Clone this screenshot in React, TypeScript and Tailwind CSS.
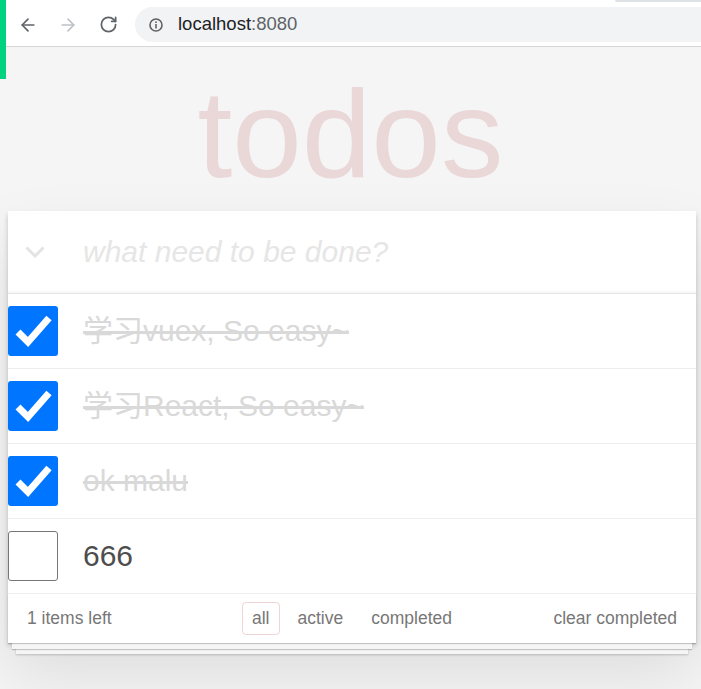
import { ArrowLeft, ArrowRight, RotateCw } from "lucide-react";

const todos = [
  { text: "学习vuex, So easy~", done: true },
  { text: "学习React, So easy~", done: true },
  { text: "ok malu", done: true },
  { text: "666", done: false },
];

function CheckBox({ checked }: { checked: boolean }) {
  if (!checked) {
    return <div className="h-[50px] w-[50px] shrink-0 rounded-[3px] border border-[#767676] bg-white" />;
  }
  return (
    <div className="h-[50px] w-[50px] shrink-0 rounded-[3px] bg-[#0075ff]">
      <svg width="50" height="50" viewBox="0 0 50 50">
        <polyline points="10,26 20,36 41,12" fill="none" stroke="#fff" strokeWidth="7" />
      </svg>
    </div>
  );
}

export default function App() {
  return (
    <div className="relative min-h-[689px] w-[701px] overflow-hidden bg-[#f5f5f5] font-['Liberation_Sans','Noto_Sans_CJK_SC',sans-serif]">
      {/* green strip on the left edge */}
      <div className="absolute left-0 top-0 z-10 h-[79px] w-[6px] bg-[#00d27f]" />

      {/* browser chrome */}
      <div className="h-[47px] border-b border-[#d6d6d6] bg-white">
        <div className="flex h-[7px] justify-end">
          <div className="h-[2px] w-[86px] rounded-bl-[4px] bg-[#dee1e6]" />
        </div>
        <div className="flex h-[35px] items-center overflow-hidden">
          <div className="flex w-[135px] items-center">
            <ArrowLeft className="ml-[18px]" size={20} color="#5f6368" strokeWidth={2} />
            <ArrowRight className="ml-[20px]" size={20} color="#bdc1c6" strokeWidth={2} />
            <RotateCw className="ml-[21px]" size={19} color="#5f6368" strokeWidth={2.2} />
          </div>
          <div className="-mr-[40px] flex h-[35px] flex-1 items-center rounded-full bg-[#f1f3f4] pl-[14px]">
            <svg width="14" height="14" viewBox="0 0 14 14">
              <circle cx="7" cy="7" r="6" fill="none" stroke="#5f6368" strokeWidth="1.6" />
              <rect x="6.2" y="6" width="1.6" height="4.5" fill="#5f6368" />
              <rect x="6.2" y="3.4" width="1.6" height="1.6" fill="#5f6368" />
            </svg>
            <span className="ml-[15px] text-[18.5px] leading-none text-[#202124]">
              localhost<span className="text-[#5f6368]">:8080</span>
            </span>
          </div>
        </div>
      </div>

      {/* page */}
      <div className="pt-[24px]">
        <h1 className="h-[125px] text-center text-[125px] font-normal leading-none text-[#ead7d7]">todos</h1>

        <div className="ml-[8px] mt-[15px] w-[688px] bg-white shadow-[0_2.5px_5px_0_rgba(0,0,0,0.2),0_31px_62px_0_rgba(0,0,0,0.1)]">
          {/* input */}
          <div className="flex h-[83px] items-center border-b border-[#e6e6e6] shadow-[inset_0_-2px_1px_rgba(0,0,0,0.03)]">
            <svg className="ml-[17px] shrink-0" width="20" height="12" viewBox="0 0 20 12">
              <polyline points="1.5,1.5 10,10 18.5,1.5" fill="none" stroke="#e3e3e3" strokeWidth="3" />
            </svg>
            <span className="ml-[38px] text-[30px] italic leading-[42px] text-[#e6e6e6]">what need to be done?</span>
          </div>

          {/* list */}
          {todos.map((t) => (
            <div key={t.text} className="flex h-[75px] items-center border-b border-[#ededed]">
              <CheckBox checked={t.done} />
              <span
                className={
                  t.done
                    ? "ml-[25px] text-[30px] leading-[36px] text-[#d9d9d9] line-through"
                    : "ml-[25px] text-[30px] leading-[36px] text-[#4d4d4d]"
                }
              >
                {t.text}
              </span>
            </div>
          ))}

          {/* footer */}
          <div className="grid h-[49px] grid-cols-[1fr_auto_1fr] items-center px-[19px] pb-[1px] text-[17.5px] leading-[25px] text-[#777] shadow-[0_1px_1px_rgba(0,0,0,0.2),0_10px_0_-4px_#f6f6f6,0_11px_1px_-4px_rgba(0,0,0,0.2),0_19px_0_-8px_#f6f6f6,0_20px_2px_-8px_rgba(0,0,0,0.2)]">
            <span>1 items left</span>
            <div className="flex">
              <span className="mx-[4px] rounded-[4px] border border-[rgba(175,47,47,0.2)] px-[9px] py-[3px]">all</span>
              <span className="mx-[4px] border border-transparent px-[9px] py-[3px]">active</span>
              <span className="mx-[4px] border border-transparent px-[9px] py-[3px]">completed</span>
            </div>
            <span className="justify-self-end">clear completed</span>
          </div>
        </div>
      </div>
    </div>
  );
}
